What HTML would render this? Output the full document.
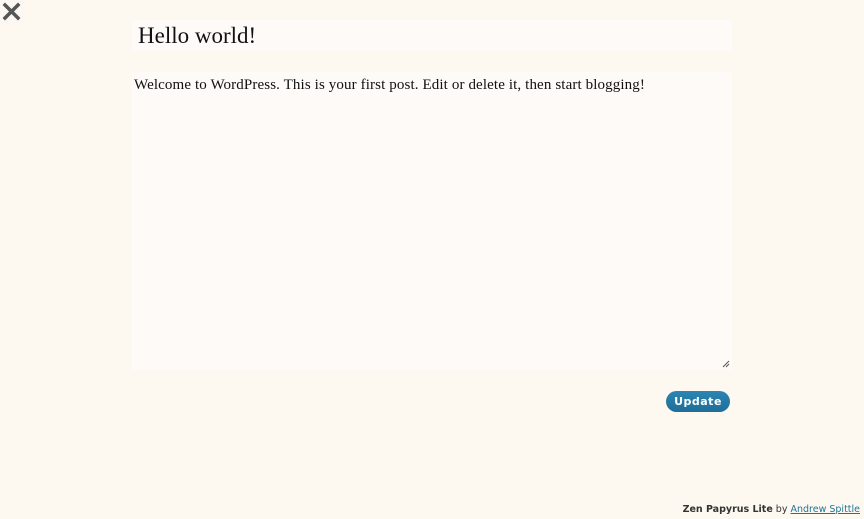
<!DOCTYPE html>
<html><head><meta charset="utf-8"><style>
html,body{margin:0;padding:0;width:864px;height:519px;background:#fdf8f0;overflow:hidden;position:relative}
.x{position:absolute;left:0;top:0;width:24px;height:24px;background:#fcf7f2}
.title{position:absolute;left:132px;top:20px;width:600px;height:31px;background:#fefaf7;font-family:"Liberation Serif",serif;font-size:23px;color:#111;line-height:31px;padding-left:6px;box-sizing:border-box}
.ta{position:absolute;left:132px;top:72px;width:600px;height:298px;background:#fefaf7;font-family:"Liberation Serif",serif;font-size:15px;letter-spacing:0.12px;color:#111;padding:5px 2px;box-sizing:border-box}
.grip{position:absolute;right:2px;bottom:2px}
.btn{position:absolute;left:666px;top:391px;width:64px;height:21px;border-radius:11px;background:linear-gradient(#2a86b3,#1f6e98);color:#fff;font:bold 11px "DejaVu Sans",sans-serif;text-align:center;line-height:22px;letter-spacing:0.5px}
.foot{position:absolute;right:4px;top:504px;font:9.5px "DejaVu Sans",sans-serif;color:#333}
.foot a{color:#21759b;text-decoration:underline}
</style></head><body>
<div class="x"><svg width="24" height="24"><path d="M5 5L18 18M18 5L5 18" stroke="#555" stroke-width="3.5" stroke-linecap="square"/></svg></div>
<div class="title">Hello world!</div>
<div class="ta">Welcome to WordPress. This is your first post. Edit or delete it, then start blogging!
<svg class="grip" width="8" height="8"><path d="M1 7L7 1M4 7L7 4" stroke="#555" stroke-width="1"/></svg></div>
<div class="btn">Update</div>
<div class="foot"><b>Zen Papyrus Lite</b> by <a>Andrew Spittle</a></div>
</body></html>
